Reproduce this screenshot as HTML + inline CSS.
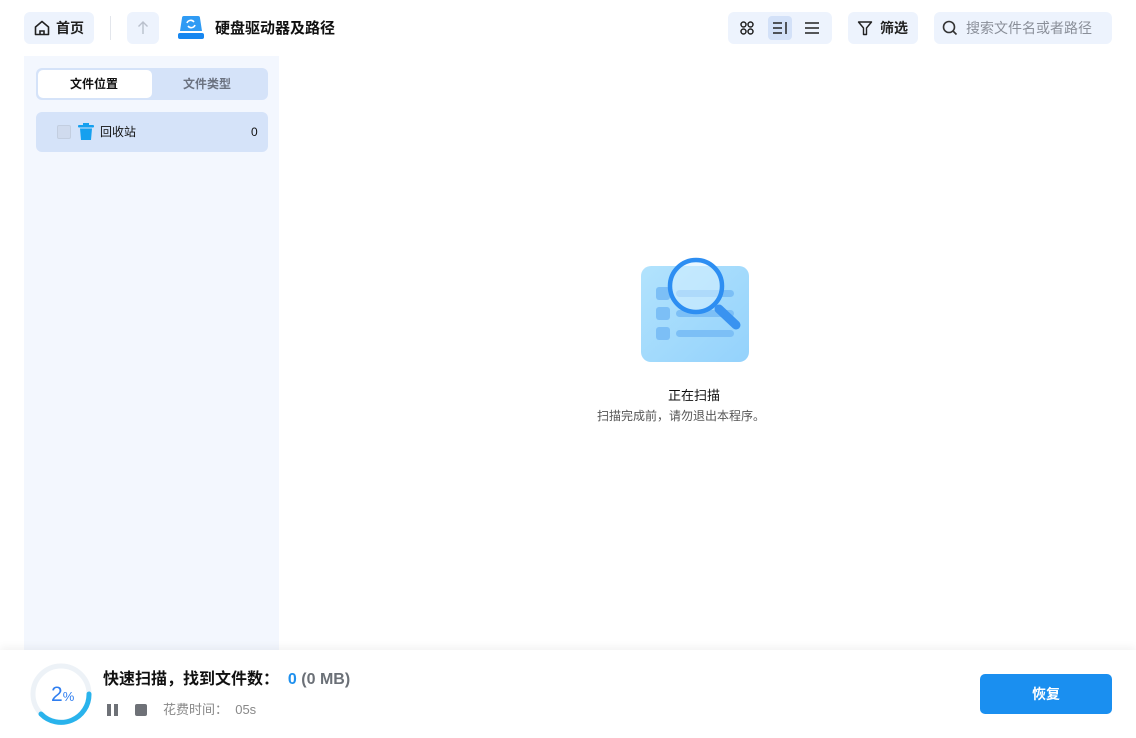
<!DOCTYPE html>
<html><head><meta charset="utf-8"><style>
*{margin:0;padding:0;box-sizing:border-box}
body{width:1136px;height:738px;background:#fff;font-family:"Liberation Sans","Noto Sans CJK SC",sans-serif;position:relative;overflow:hidden;color:#222}
.abs{position:absolute}
.t{line-height:1}
.btn{position:absolute;background:#edf3fd;border-radius:6px}
.b{font-weight:bold}
</style></head><body>
<div class="btn" style="left:24px;top:12px;width:70px;height:32px"></div>
<svg class="abs" style="left:33px;top:19px" width="18" height="18" viewBox="0 0 18 18"><path d="M2.5 8 L9 2.5 L15.5 8 V15.5 H2.5 Z" fill="none" stroke="#222" stroke-width="1.6" stroke-linejoin="round"/><path d="M7 15.5 V12 H11 V15.5" fill="none" stroke="#222" stroke-width="1.6"/></svg>
<div class="abs b t" style="left:56px;top:21px;font-size:14px">首页</div>
<div class="abs" style="left:110px;top:16px;width:1px;height:24px;background:#e3e6ec"></div>
<div class="btn" style="left:127px;top:12px;width:32px;height:32px"></div>
<svg class="abs" style="left:135px;top:20px" width="16" height="16"><path d="M8 2V14M3.5 6.5L8 2L12.5 6.5" fill="none" stroke="#b9c0cc" stroke-width="1.4"/></svg>
<svg class="abs" style="left:177px;top:15px" width="28" height="26" viewBox="0 0 28 26"><path d="M5 3 Q5 1 7 1 H21 Q23 1 23 3 L25 16 H3 Z" fill="#2f9bf4"/><rect x="1" y="18" width="26" height="6" rx="2" fill="#1787f0"/><path d="M10 8 A4 4 0 0 1 17 7 M18 10 A4 4 0 0 1 11 11" stroke="#fff" stroke-width="1.6" fill="none"/></svg>
<div class="abs b t" style="left:215px;top:21px;font-size:15px;color:#111">硬盘驱动器及路径</div>

<div class="btn" style="left:728px;top:12px;width:104px;height:32px"></div>
<svg class="abs" style="left:740px;top:21px" width="14" height="14"><g fill="none" stroke="#222" stroke-width="1.5"><circle cx="3.5" cy="3.5" r="2.5"/><circle cx="10.5" cy="3.5" r="2.5"/><circle cx="3.5" cy="10.5" r="2.5"/><circle cx="10.5" cy="10.5" r="2.5"/></g></svg>
<div class="abs" style="left:768px;top:16px;width:24px;height:24px;background:#d3e1f8;border-radius:4px"></div>
<svg class="abs" style="left:772px;top:21px" width="16" height="14"><path d="M1 2H10M1 7H10M1 12H10M14 1V13" stroke="#222" stroke-width="1.5"/></svg>
<svg class="abs" style="left:804px;top:21px" width="16" height="14"><path d="M1 2H15M1 7H15M1 12H15" stroke="#222" stroke-width="1.4"/></svg>
<div class="btn" style="left:848px;top:12px;width:70px;height:32px"></div>
<svg class="abs" style="left:857px;top:20px" width="16" height="16"><path d="M1.5 2H14.5L9.5 8V14.5H6.5V8Z" fill="none" stroke="#222" stroke-width="1.4" stroke-linejoin="round"/></svg>
<div class="abs b t" style="left:880px;top:21px;font-size:14px">筛选</div>
<div class="btn" style="left:934px;top:12px;width:178px;height:32px"></div>
<svg class="abs" style="left:942px;top:20px" width="16" height="16"><circle cx="7" cy="7" r="5.5" fill="none" stroke="#333" stroke-width="1.6"/><path d="M11 11L14.5 14.5" stroke="#333" stroke-width="1.6"/></svg>
<div class="abs t" style="left:966px;top:21px;font-size:14px;color:#8a8f99">搜索文件名或者路径</div>

<div class="abs" style="left:24px;top:56px;width:255px;height:600px;background:#f3f7fe"></div>
<div class="abs" style="left:36px;top:68px;width:232px;height:32px;background:#d5e3f9;border-radius:6px"></div>
<div class="abs" style="left:38px;top:70px;width:114px;height:28px;background:#fff;border-radius:5px"></div>
<div class="abs b t" style="left:70px;top:78px;font-size:12px;color:#111">文件位置</div>
<div class="abs b t" style="left:183px;top:78px;font-size:12px;color:#6b7280">文件类型</div>
<div class="abs" style="left:36px;top:112px;width:232px;height:40px;background:#d5e3f9;border-radius:6px"></div>
<div class="abs" style="left:57px;top:125px;width:14px;height:14px;border:1px solid #c3cee0;background:#d0dbee;border-radius:2px"></div>
<svg class="abs" style="left:78px;top:123px" width="16" height="18"><rect x="0" y="2" width="16" height="2.5" rx="1" fill="#16a0ef"/><rect x="5" y="0" width="6" height="2.5" fill="#16a0ef"/><path d="M2 5.5H14L13 17H3Z" fill="#16a0ef"/></svg>
<div class="abs t" style="left:100px;top:126px;font-size:12px;color:#111">回收站</div>
<div class="abs t" style="left:251px;top:126px;font-size:12px;color:#111">0</div>

<svg class="abs" style="left:640px;top:256px" width="112" height="108" viewBox="0 0 112 108"><defs><linearGradient id="g" x1="0" y1="0" x2="1" y2="1"><stop offset="0" stop-color="#b2e3fd"/><stop offset="1" stop-color="#94d2fc"/></linearGradient></defs><rect x="1" y="10" width="108" height="96" rx="10" fill="url(#g)"/><g fill="#7cbff6"><rect x="16" y="31" width="14" height="13" rx="3"/><rect x="16" y="51" width="14" height="13" rx="3"/><rect x="16" y="71" width="14" height="13" rx="3"/><rect x="36" y="34" width="58" height="7" rx="3.5"/><rect x="36" y="54" width="58" height="7" rx="3.5"/><rect x="36" y="74" width="58" height="7" rx="3.5"/></g><circle cx="56" cy="30" r="26" fill="rgba(215,240,255,.55)" stroke="#2d8ef2" stroke-width="4.5"/><path d="M79 53L96 69" stroke="#3a93f0" stroke-width="9" stroke-linecap="round"/></svg>
<div class="abs t" style="left:668px;top:389px;font-size:13px;color:#111">正在扫描</div>
<div class="abs t" style="left:597px;top:410px;font-size:12px;color:#555">扫描完成前，请勿退出本程序。</div>

<div class="abs" style="left:0;top:650px;width:1136px;height:88px;background:#fff;box-shadow:0 -3px 8px rgba(0,0,0,.05)"></div>
<svg class="abs" style="left:30px;top:663px" width="62" height="62" viewBox="0 0 62 62"><circle cx="31" cy="31" r="28" fill="none" stroke="#edf2f7" stroke-width="5"/><path d="M59 31 A28 28 0 0 1 11 51" fill="none" stroke="#29b3ec" stroke-width="5" stroke-linecap="round"/></svg>
<div class="abs t" style="left:51px;top:684px;font-size:21px;color:#2f7ef0">2<span style="font-size:13px">%</span></div>
<div class="abs b t" style="left:103px;top:672px;font-size:16px;color:#111">快速扫描，找到文件数：&nbsp; <span style="color:#1e90ee">0</span> <span style="color:#6b7077">(0 MB)</span></div>
<div class="abs" style="left:107px;top:704px;width:4px;height:12px;background:#6e7177"></div>
<div class="abs" style="left:114px;top:704px;width:4px;height:12px;background:#6e7177"></div>
<div class="abs" style="left:135px;top:704px;width:12px;height:12px;background:#6e7177;border-radius:2px"></div>
<div class="abs t" style="left:163px;top:703px;font-size:13px;color:#888">花费时间：&nbsp; 05s</div>
<div class="abs b" style="left:980px;top:674px;width:132px;height:40px;background:#1a8ff0;border-radius:5px;color:#fff;font-size:14px;text-align:center;line-height:40px">恢复</div>
</body></html>
